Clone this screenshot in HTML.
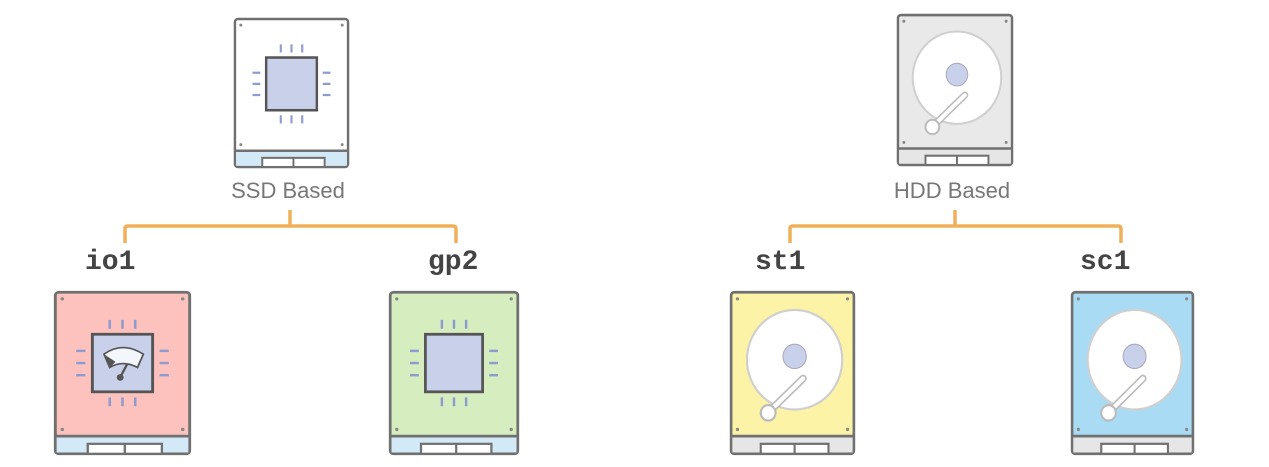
<!DOCTYPE html>
<html><head><style>
html,body{margin:0;padding:0;background:#fff;width:1269px;height:467px;overflow:hidden;position:relative;font-family:"Liberation Sans",sans-serif}
svg.d{position:absolute}
.lbl{position:absolute;font-size:22px;color:#777;text-align:center;width:200px}
.m{position:absolute;font-family:"Liberation Mono",monospace;font-weight:bold;font-size:28px;color:#444}
</style></head><body>
<svg width="0" height="0" style="position:absolute">
<defs>
<symbol id="frame" viewBox="0 0 120 150">
 <rect x="2" y="2" width="116" height="146" rx="3" fill="var(--body)" stroke="#707070" stroke-width="2.5"/>
 <rect x="3.2" y="132" width="113.6" height="14.8" fill="var(--strip)"/>
 <line x1="2" y1="132" x2="118" y2="132" stroke="#707070" stroke-width="2.5"/>
 <rect x="30" y="139" width="64" height="9" fill="#fff" stroke="#707070" stroke-width="2"/>
 <line x1="62" y1="139" x2="62" y2="148" stroke="#707070" stroke-width="2"/>
 <g fill="#888"><circle cx="8" cy="8" r="1.5"/><circle cx="112" cy="8" r="1.5"/><circle cx="8" cy="126" r="1.5"/><circle cx="112" cy="126" r="1.5"/></g>
</symbol>
<symbol id="chip" viewBox="0 0 120 150">
 <g stroke="#8e9bd0" stroke-width="2.2">
  <line x1="49" y1="27" x2="49" y2="35"/><line x1="60" y1="27" x2="60" y2="35"/><line x1="71" y1="27" x2="71" y2="35"/>
  <line x1="49" y1="97" x2="49" y2="105"/><line x1="60" y1="97" x2="60" y2="105"/><line x1="71" y1="97" x2="71" y2="105"/>
  <line x1="20" y1="55" x2="28" y2="55"/><line x1="20" y1="66" x2="28" y2="66"/><line x1="20" y1="77" x2="28" y2="77"/>
  <line x1="92" y1="55" x2="100" y2="55"/><line x1="92" y1="66" x2="100" y2="66"/><line x1="92" y1="77" x2="100" y2="77"/>
 </g>
 <rect x="34" y="40" width="52" height="52" fill="#c8d0ea" stroke="#555" stroke-width="2.5"/>
</symbol>
<symbol id="hdd" viewBox="0 0 120 150">
 <circle cx="62" cy="63" r="45" fill="#fff" stroke="#cfcfcf" stroke-width="2"/>
 <circle cx="62" cy="60" r="11" fill="#c8d0ea" stroke="#aab"/>
 <path d="M70 80 L40 108" stroke="#bbb" stroke-width="7" stroke-linecap="round"/>
 <path d="M70 80 L40 108" stroke="#fff" stroke-width="4" stroke-linecap="round"/>
 <circle cx="37" cy="111" r="7" fill="#fff" stroke="#bbb" stroke-width="2"/>
</symbol>
</defs>
</svg>

<svg class="d" style="left:233px;top:17px;--body:#fff;--strip:#d3e9f7" width="117" height="152" viewBox="0 0 120 150" preserveAspectRatio="none"><use href="#frame"/><use href="#chip"/></svg>
<div class="lbl" style="left:188px;top:178px">SSD Based</div>
<svg class="d" style="left:896px;top:13px;--body:#e9e9ea;--strip:#e6e6e6" width="118" height="154" viewBox="0 0 120 150" preserveAspectRatio="none"><use href="#frame"/><use href="#hdd"/></svg>
<div class="lbl" style="left:852px;top:178px">HDD Based</div>

<svg class="d" style="left:0;top:0" width="1269" height="467">
 <g fill="none" stroke="#f0b05a" stroke-width="3.5" stroke-linejoin="round">
  <path d="M125 243 V228 Q125 226 128 226 H453 Q456 226 456 229 V243"/>
  <path d="M290 226 V210"/>
  <path d="M790 243 V228 Q790 226 793 226 H1118 Q1121 226 1121 229 V243"/>
  <path d="M955 226 V210"/>
 </g>
</svg>

<div class="m" style="left:85px;top:247px">io1</div>
<div class="m" style="left:428px;top:247px">gp2</div>
<div class="m" style="left:755px;top:247px">st1</div>
<div class="m" style="left:1080px;top:247px">sc1</div>

<svg class="d" style="left:53px;top:290px;--body:#fdc2bd;--strip:#d3e9f7" width="139" height="166" viewBox="0 0 120 150" preserveAspectRatio="none"><use href="#frame"/><use href="#chip"/>
 <path d="M44 58 Q60 46 78 58 L73 70 Q60 63 49 70 Z" fill="#f3f6fb" stroke="#555" stroke-width="1.5"/>
 <path d="M44 58 L49 70 L54 65 Z" fill="#555"/>
 <line x1="64" y1="67" x2="58" y2="79" stroke="#555" stroke-width="2"/><circle cx="58" cy="79" r="3" fill="#555"/>
</svg>
<svg class="d" style="left:388px;top:290px;--body:#d6edbf;--strip:#d3e9f7" width="132" height="166" viewBox="0 0 120 150" preserveAspectRatio="none"><use href="#frame"/><use href="#chip"/></svg>
<svg class="d" style="left:729px;top:290px;--body:#fcf3a6;--strip:#e6e6e6" width="127" height="166" viewBox="0 0 120 150" preserveAspectRatio="none"><use href="#frame"/><use href="#hdd"/></svg>
<svg class="d" style="left:1070px;top:290px;--body:#a9dcf4;--strip:#e6e6e6" width="125" height="166" viewBox="0 0 120 150" preserveAspectRatio="none"><use href="#frame"/><use href="#hdd"/></svg>
</body></html>
